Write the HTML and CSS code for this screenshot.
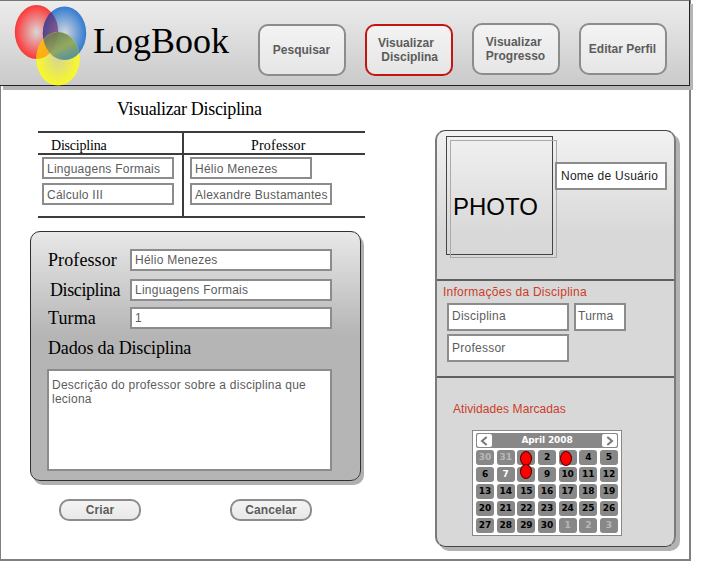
FILE: index.html
```html
<!DOCTYPE html>
<html lang="pt-BR">
<head>
<meta charset="utf-8">
<title>LogBook</title>
<link rel="stylesheet" href="styles.css">
</head>
<body>
<div class="page">
  <header class="header">
    <svg class="logo" width="80" height="86" viewBox="0 0 80 86">
      <defs>
        <radialGradient id="red"><stop offset="0" stop-color="#dcd4d4"/><stop offset="1" stop-color="#ff2424"/></radialGradient>
        <radialGradient id="blue"><stop offset="0" stop-color="#d0d8e0"/><stop offset="1" stop-color="#1468cc"/></radialGradient>
        <radialGradient id="yellow"><stop offset="0" stop-color="#d8d48c"/><stop offset="1" stop-color="#ffff10"/></radialGradient>
        <linearGradient id="mix" gradientUnits="userSpaceOnUse" x1="46" y1="34" x2="60" y2="60"><stop offset="0" stop-color="#5c7468"/><stop offset=".5" stop-color="#84a060"/><stop offset="1" stop-color="#3c80b0"/></linearGradient>
        <clipPath id="redClip"><ellipse cx="26.5" cy="32" rx="21.7" ry="27"/></clipPath>
        <clipPath id="blueClip"><ellipse cx="54.5" cy="33.3" rx="21.7" ry="26.8"/></clipPath>
      </defs>
      <ellipse cx="26.5" cy="32" rx="21.7" ry="27" fill="url(#red)" opacity=".9"/>
      <ellipse cx="54.5" cy="33.3" rx="21.7" ry="26.8" fill="url(#blue)" opacity=".85"/>
      <ellipse cx="54.5" cy="33.3" rx="21.7" ry="26.8" fill="#6a1858" opacity=".5" clip-path="url(#redClip)"/>
      <ellipse cx="48" cy="58.7" rx="21.7" ry="26.8" fill="url(#yellow)" opacity=".88"/>
      <ellipse cx="48" cy="58.7" rx="21.7" ry="26.8" fill="#ff9000" opacity=".6" clip-path="url(#redClip)"/>
      <ellipse cx="48" cy="58.7" rx="21.7" ry="26.8" fill="url(#mix)" opacity=".85" clip-path="url(#blueClip)"/>
    </svg>
    <h1 class="brand">LogBook</h1>
    <nav class="nav">
      <a class="tab">Pesquisar</a>
      <a class="tab active">Visualizar<br>&nbsp;Disciplina</a>
      <a class="tab up">Visualizar<br>Progresso</a>
      <a class="tab up">Editar Perfil</a>
    </nav>
  </header>
  <div class="body">
    <main class="main">
      <h2 class="title">Visualizar Disciplina</h2>
      <div class="table">
        <div class="col">
          <div class="th">Disciplina</div>
          <div class="cells"><div class="field">Linguagens Formais</div><div class="field">Cálculo III</div></div>
        </div>
        <div class="col second">
          <div class="th">Professor</div>
          <div class="cells"><div class="field short">Hélio Menezes</div><div class="field wide">Alexandre Bustamantes</div></div>
        </div>
      </div>
      <section class="form">
        <div class="row"><span class="label">Professor</span><div class="field">Hélio Menezes</div></div>
        <div class="row second-row"><span class="label tight">Disciplina</span><div class="field">Linguagens Formais</div></div>
        <div class="row third-row"><span class="label">Turma</span><div class="field">1</div></div>
        <div class="label heading">Dados da Disciplina</div>
        <div class="field area">Descrição do professor sobre a disciplina que<br>leciona</div>
      </section>
      <div class="actions"><span class="button">Criar</span><span class="button">Cancelar</span></div>
    </main>
    <aside class="side">
      <section class="profile">
        <div class="photo">PHOTO</div>
        <div class="field user">Nome de Usuário</div>
      </section>
      <section class="info">
        <h3 class="caption">Informações da Disciplina</h3>
        <div class="info-row"><div class="field box">Disciplina</div><div class="field box small">Turma</div></div>
        <div class="field box lower">Professor</div>
      </section>
      <section class="agenda">
        <h3 class="caption">Atividades Marcadas</h3>
        <div class="calendar">
          <div class="month">
            <span class="arrow"><svg width="13" height="12" viewBox="0 0 13 12"><path d="M8.7 2 4 6l4.700 4"/></svg></span>
            <span>April 2008</span>
            <span class="arrow"><svg width="13" height="12" viewBox="0 0 13 12"><path d="M4.300 2 9 6l-4.700 4"/></svg></span>
          </div>
          <div class="days">
            <i class="off">30</i><i class="off">31</i><i><b class="dot"></b></i><i>2</i><i><b class="dot left"></b></i><i>4</i><i>5</i>
            <i>6</i><i class="today">7</i><i><b class="dot high"></b></i><i>9</i><i>10</i><i>11</i><i>12</i>
            <i>13</i><i>14</i><i>15</i><i>16</i><i>17</i><i>18</i><i>19</i>
            <i>20</i><i>21</i><i>22</i><i>23</i><i>24</i><i>25</i><i>26</i>
            <i>27</i><i>28</i><i>29</i><i>30</i><i class="off">1</i><i class="off">2</i><i class="off">3</i>
          </div>
        </div>
      </section>
    </aside>
  </div>
</div>
</body>
</html>
```
FILE: styles.css
```css
*, *::after { box-sizing: border-box; }
body { margin: 0; background: #fff; font: 12px/14px "Liberation Sans", Arial, sans-serif; color: #5c5c5c; }
h1, h2, h3 { margin: 0; font-weight: normal; }
.page { width: 691px; height: 561px; border: solid #808080; border-width: 0 2px 2px 1px; }
.header {
  position: relative; display: flex; width: 690px; height: 86px; margin-left: -1px;
  border: solid #222; border-width: 1px 1px 1px 0; border-top-color: #777;
  background: linear-gradient(#ececec, #cacaca); box-shadow: 3px 4px 0 #b4b4b4;
}
.logo { flex: none; margin: -1px 0 0 10px; }
.brand { width: 168px; padding-left: 3px; font: 36px/40px "Liberation Serif", serif; color: #000; margin-top: 20px; }
.nav { display: flex; gap: 19px; margin: 23px 0 0 0; }
.tab {
  display: flex; align-items: center; justify-content: center; width: 88px; height: 52px; padding-right: 1px;
  border: 2px solid #8c8c8c; border-radius: 10px; background: linear-gradient(#f3f3f3, #e6e6e6);
  font-weight: bold; letter-spacing: 0; white-space: nowrap;
}
.tab.active { border-color: #c41414; padding-right: 2px; }
.tab.up { margin-top: -1px; }
.body { display: flex; height: 473px; }
.main { width: 434px; padding-left: 29px; }
.title { margin: 13px 0 0 87px; font: 18px/20px "Liberation Serif", serif; letter-spacing: -.32px; color: #000; }
.table {
  display: grid; grid-template-columns: 146px 181px; width: 327px; height: 87px;
  margin: 12px 0 0 8px; border: solid #3c3c3c; border-width: 2px 0;
}
.second { border-left: 2px solid #3c3c3c; margin-left: -2px; }
.th { height: 22px; padding: 4px 0 0 13px; border-bottom: 2px solid #3c3c3c; font: 14px/17px "Liberation Serif", serif; letter-spacing: -.2px; color: #000; }
.second .th { padding-left: 67px; letter-spacing: .2px; }
.field {
  height: 22px; border: 2px solid #8c8c8c; background: #fff; padding: 2px 3px;
  letter-spacing: .25px; white-space: nowrap;
}
.cells { display: grid; gap: 4px; padding: 2px 0 0 4px; }
.cells .field { width: 132px; padding-top: 3px; }
.second .cells { padding-left: 6px; }
.cells .field.short { width: 122px; }
.cells .field.wide { width: 142px; }
.form {
  width: 331px; height: 250px; margin-top: 13px; padding: 17px 16px 0; border: 1px solid #303030;
  border-radius: 10px; background: linear-gradient(#e8e8e8, #b5b5b5 42%); box-shadow: 3px 4px 0 #b0b0b0;
}
.row { display: flex; height: 22px; }
.label { width: 83px; padding-left: 1px; font: 18px/22px "Liberation Serif", serif; color: #000; letter-spacing: .1px; white-space: nowrap; }
.label.tight { padding-left: 3px; letter-spacing: -.4px; }
.row .field { width: 202px; }
.second-row { margin-top: 8px; }
.third-row { margin-top: 6px; }
.heading { margin-top: 8px; letter-spacing: -.15px; }
.field.area { width: 285px; height: 102px; margin-top: 10px; padding-top: 7px; }
.actions { display: flex; gap: 89px; margin: 18px 0 0 29px; }
.button {
  width: 82px; height: 22px; border: 2px solid #8c8c8c; border-radius: 10px;
  background: linear-gradient(#f4f4f4, #e8e8e8); line-height: 18px; font-weight: bold; text-align: center; letter-spacing: .1px;
}
.side {
  width: 241px; height: 417px; margin-top: 44px; border: solid #7a7a7a; border-width: 1px 2px;
  border-top-color: #444; border-bottom-color: #444; border-radius: 10px;
  background: linear-gradient(#f2f2f2, #d8d8d8 25%); box-shadow: 4px 4px 0 #b2b2b2; flex: none;
}
.profile { display: flex; height: 150px; padding: 5px 0 0 9px; border-bottom: 2px solid #606060; }
.photo {
  position: relative; width: 107px; height: 119px; padding: 56px 0 0 6px; border: 1px solid #444;
  font-size: 24px; line-height: 28px; color: #000;
}
.photo::after { content: ""; position: absolute; left: 3px; top: 3px; width: 107px; height: 118px; border: 1px solid #aaa; }
.field.user { width: 112px; height: 28px; margin: 26px 0 0 2px; padding: 5px 4px; color: #222; letter-spacing: .25px; position: relative; }
.info { height: 97px; padding: 3px 0 0 10px; border-bottom: 2px solid #606060; }
.caption { margin-left: -4px; font-size: 12px; line-height: 16px; color: #cc3c28; letter-spacing: .26px; }
.info-row { display: flex; gap: 5px; margin-top: 3px; }
.field.box { width: 122px; height: 28px; padding: 4px 3px; }
.field.box.small { width: 52px; padding-left: 2px; }
.field.box.lower { margin-top: 3px; padding-top: 5px; }
.agenda { padding: 23px 0 0 35px; }
.agenda .caption { margin-left: -19px; letter-spacing: .08px; }
.calendar { width: 150px; height: 106px; margin-top: 13px; padding: 2px 3px; border: 1px solid #888; background: #fff; font: bold 9px/15px "DejaVu Sans", sans-serif; letter-spacing: -.1px; }
.month { display: flex; align-items: center; justify-content: space-between; height: 15px; padding: 0 1px; border-radius: 2px; background: #888; color: #fff; }
.arrow { display: flex; width: 15px; height: 13px; align-items: center; justify-content: center; background: #fff; border-radius: 2px; }
.arrow path { fill: none; stroke: #777; stroke-width: 2; }
.days { display: grid; grid-template: repeat(5, 15px) / repeat(7, 18px); justify-content: space-between; row-gap: 2px; margin-top: 2px; }
.days i { position: relative; border-radius: 3px; background: #888; color: #000; text-align: center; font-style: normal; }
.days .off { color: #b8b8b8; }
.days .today { color: #fff; }
.dot { position: absolute; left: 3px; top: 1px; width: 12px; height: 15px; border: 1px solid #500; border-radius: 50%; background: #f00; }
.dot.left { left: 1px; }
.dot.high { top: -3px; }
```
